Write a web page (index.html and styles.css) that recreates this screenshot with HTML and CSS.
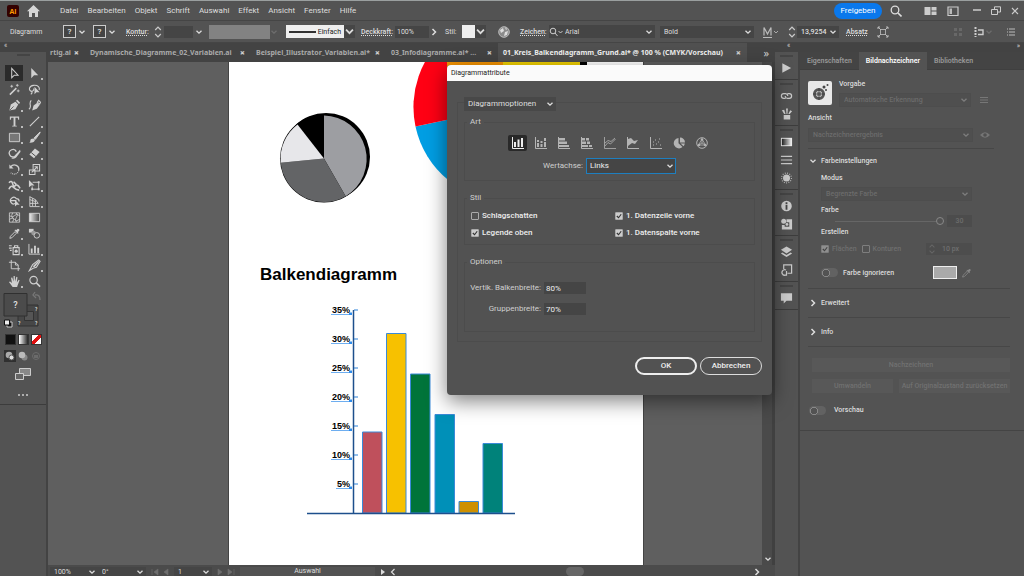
FILE: index.html
```
<!DOCTYPE html>
<html lang="de">
<head>
<meta charset="utf-8">
<title>Diagrammattribute</title>
<link rel="stylesheet" href="styles.css">
</head>
<body>
<svg class="defs" aria-hidden="true">
  <symbol id="chev" viewBox="0 0 8 8"><path d="M1.5 2.7 4 5.2 6.5 2.7" fill="none" stroke="currentColor" stroke-width="1.3"/></symbol>
  <symbol id="step" viewBox="0 0 8 14"><path d="M1.2 5 4 2.2 6.8 5M1.2 9 4 11.8 6.8 9" fill="none" stroke="currentColor" stroke-width="1.2"/></symbol>
  <symbol id="right" viewBox="0 0 8 8"><path d="M2.5 1 5.5 4 2.5 7" fill="none" stroke="currentColor" stroke-width="1.5"/></symbol>
  <symbol id="left" viewBox="0 0 8 8"><path d="M5.5 1 2.5 4 5.5 7" fill="none" stroke="currentColor" stroke-width="1.2"/></symbol>
  <symbol id="pipette" viewBox="0 0 14 14"><path d="M2 12.2 2.6 10 7.6 5 9.2 6.6 4.2 11.6Z" fill="none" stroke="currentColor"/><path d="M7 3.6 10.6 7.2 11.4 6.4 10.6 5.6 12.4 3.6Q12.4 1.8 10.6 1.8L8.6 3.6 7.8 2.8Z" fill="currentColor"/></symbol>
</svg>
<div class="app">
  <header class="menubar">
    <svg class="logo" viewBox="0 0 12 12"><rect width="12" height="12" rx="2" fill="#330000"/><text x="6" y="8.6" text-anchor="middle">Ai</text></svg>
    <svg class="home" viewBox="0 0 13 12"><path d="M6.5 0 0 6.2H2V12H5V8H8V12H11V6.2H13Z" fill="#d6d6d6"/></svg>
    <nav class="menu">
      <button>Datei</button><button>Bearbeiten</button><button>Objekt</button><button>Schrift</button><button>Auswahl</button><button>Effekt</button><button>Ansicht</button><button>Fenster</button><button>Hilfe</button>
    </nav>
    <div class="winbar">
      <button class="share">Freigeben</button>
      <svg class="i12" viewBox="0 0 12 12"><circle cx="5" cy="5" r="3.8" fill="none" stroke="#ddd" stroke-width="1.3"/><path d="M8 8 11.5 11.5" stroke="#ddd" stroke-width="1.6"/></svg>
      <svg class="arrange" viewBox="0 0 12 12"><path d="M0 2H6V10H0ZM7 2H12V5.5H7ZM7 6.5H12V10H7Z" fill="#ccc"/></svg>
      <svg class="i12" viewBox="0 0 12 12"><path d="M1 2H11V10.5H1Z" fill="none" stroke="#ccc" stroke-width="1.2"/><path d="M2.5 3.5H5V9H2.5Z" fill="#bbb"/></svg>
      <svg class="min" viewBox="0 0 8 8"><path d="M0 3H8" stroke="#ccc" stroke-width="1.5"/></svg>
      <svg class="restore" viewBox="0 0 10 10"><path d="M.5 3.5H6.5V8.5H.5ZM3.5 3V.8H9.5V6H7" fill="none" stroke="#ccc"/></svg>
      <svg class="close" viewBox="0 0 8 8"><path d="M1 1 7 7M7 1 1 7" stroke="#ccc" stroke-width="1.1"/></svg>
    </div>
  </header>

  <div class="options">
    <span class="w-name">Diagramm</span>
    <button class="q">?</button><svg class="chev"><use href="#chev"/></svg>
    <button class="q q2">?</button><svg class="chev"><use href="#chev"/></svg>
    <label class="link kontur" for="stroke">Kontur:</label>
    <svg class="step"><use href="#step"/></svg>
    <input id="stroke" class="field f-stroke"><svg class="chev"><use href="#chev"/></svg>
    <span class="profile"></span><svg class="chev off"><use href="#chev"/></svg>
    <button class="brush"><svg viewBox="0 0 28 6"><path d="M0 3H27" stroke="#000" stroke-width="1.6"/></svg>Einfach</button><svg class="chev boxed"><use href="#chev"/></svg>
    <label class="link deck" for="opac">Deckkraft:</label>
    <input id="opac" class="field f-opac" value="100%"><svg class="chev more"><use href="#right"/></svg>
    <span class="stil">Stil:</span><span class="swatch"></span><svg class="chev boxed"><use href="#chev"/></svg>
    <svg class="globe" viewBox="0 0 12 12"><circle cx="6" cy="6" r="5.3" fill="#8b8b8b" stroke="#bbb"/><path d="M2 4 5 2 6 5 3 7ZM7 6 10 5 9 9 6 10ZM7 1 9 3 8 4Z" fill="#ddd"/></svg>
    <label class="link zeichen" for="font">Zeichen:</label>
    <span class="fontbox"><svg viewBox="0 0 14 10"><circle cx="4" cy="4" r="2.8" fill="none" stroke="#ccc"/><path d="M6 6 8.5 9M9.5 4 11.5 6 13.5 4" fill="none" stroke="#ccc"/></svg><select id="font" class="sel"><option>Arial</option></select></span>
    <select class="sel weight" aria-label="Schriftschnitt"><option>Bold</option></select>
    <svg class="bigm" viewBox="0 0 16 12"><path d="M1 9.500V1.500L4.500 8 8 1.500V9.500M0 11.500H9" fill="none" stroke="#bbb" stroke-width="1.200"/><path d="M11 5 13 7 15 5" fill="none" stroke="#aaa"/></svg>
    <svg class="step"><use href="#step"/></svg>
    <select class="sel size" aria-label="Schriftgrad"><option>13,9254</option></select>
    <button class="link absatz">Absatz</button>
    <svg class="i12" viewBox="0 0 12 12"><path d="M3.500 3.500H8.500V8.500H3.500Z" fill="none" stroke="#aaa"/><path d="M1 1 4 4M11 1 8 4M1 11 4 8M11 11 8 8M1 3V1H3M9 1H11V3M1 9V11H3M9 11H11V9" stroke="#bbb" fill="none"/></svg>
    <div class="optend">
      <svg class="i10" viewBox="0 0 10 10"><path d="M1 1H4V4H1ZM6 1H9V4H6ZM1 6H4V9H1ZM6 6H9V9H6Z" fill="#686868"/></svg>
      <svg class="i12" viewBox="0 0 12 12"><path d="M2.500 1V11" stroke="#ccc" stroke-width="2" stroke-dasharray="2 1"/><path d="M5 4H10V8.500H5" stroke="#ccc" stroke-width="1.400" fill="none"/></svg>
      <svg class="chev off"><use href="#chev"/></svg>
      <svg class="i10 last" viewBox="0 0 10 10"><path d="M1 2H2M3 2H9M1 5H2M3 5H9M1 8H2M3 8H9" stroke="#bbb" stroke-width="1.200"/></svg>
    </div>
  </div>

  <div class="work">
    <aside class="tools">
      <div class="dockhead">«</div>
      <div class="grip"></div>
      <div class="toolgrid">
        <button class="on"><svg viewBox="0 0 14 14"><path d="M4 1.500V11.500L6.800 8.800H10.800Z" fill="none" stroke="currentColor" stroke-width="1.100"/></svg></button>
        <button class="sub"><svg viewBox="0 0 14 14"><path d="M3.500 1V12L6.500 9H11Z" fill="currentColor"/></svg></button>
        <button><svg viewBox="0 0 14 14"><path d="M2 12.500 9 5.500" stroke="currentColor" stroke-width="1.600"/><path d="M10 1V4M8.500 2.500H11.500M4 2V5M2.500 3.500H5.500M11 7V10M9.500 8.500H12.500" stroke="currentColor" stroke-width=".9"/></svg></button>
        <button><svg viewBox="0 0 14 14"><path d="M4 9C0 8 1 3 6 2.500S13 5 12 7.500M4 9Q5 11 3 12M4 9Q7 8 6 6" fill="none" stroke="currentColor" stroke-width="1.200"/><path d="M7 4V12L9 10H12.500Z" fill="currentColor"/></svg></button>
        <button class="sub"><svg viewBox="0 0 14 14"><path d="M1.500 12.500 3 6 8 3 11 6 8 11Z" fill="currentColor"/><path d="M8.500 2 10 .8 13 4 11.800 5.500Z" fill="currentColor"/><path d="M2 12 6 8" stroke="#444" stroke-width=".8"/></svg></button>
        <button><svg viewBox="0 0 14 14"><path d="M4.500 12.500 6 7 10 4 12.500 6.500 9.500 10.500Z" fill="currentColor"/><path d="M10 3.500 11.500 1.500 13.500 3.500 12.500 5.500ZM1 11C5 8 0 5 3.500 1.500" fill="none" stroke="currentColor" stroke-width="1.200"/></svg></button>
        <button class="sub"><svg viewBox="0 0 14 14"><path d="M2 1.500H12V5H11L10.500 3H8V11.500H9.500V12.500H4.500V11.500H6V3H3.500L3 5H2Z" fill="currentColor"/></svg></button>
        <button class="sub"><svg viewBox="0 0 14 14"><path d="M2 12 12 2" stroke="currentColor" stroke-width="1.200"/></svg></button>
        <button class="sub"><svg viewBox="0 0 14 14"><path d="M1.500 2.500H12.500V11.500H1.500Z" fill="#777" stroke="currentColor"/></svg></button>
        <button class="sub"><svg viewBox="0 0 14 14"><path d="M13 1 6.500 7.500 8 9 13 2Z" fill="currentColor" stroke="currentColor"/><path d="M6 8Q2.500 8 2.500 10.500T1 12.500Q7 13 7.500 9.500Z" fill="currentColor"/></svg></button>
        <button class="sub"><svg viewBox="0 0 14 14"><path d="M9 5A4 4 0 1 0 6.500 10.500" fill="none" stroke="currentColor" stroke-width="1.400"/><path d="M13 3 7 9.500Q6 12 3.500 12 7 13.500 9 11L13.500 5Z" fill="currentColor"/></svg></button>
        <button class="sub"><svg viewBox="0 0 14 14"><path d="M1.500 8 7.500 1.500 12.500 5.500 6.500 12Z" fill="currentColor"/><path d="M3.500 6 8.500 10.200" stroke="#444"/></svg></button>
        <button class="sub"><svg viewBox="0 0 14 14"><path d="M3 4A4.800 4.800 0 0 1 11.500 8" fill="none" stroke="currentColor" stroke-width="1.400"/><path d="M11.500 8A5 5 0 0 1 3 10.500" fill="none" stroke="currentColor" stroke-width="1.200" stroke-dasharray="1 1"/><path d="M1.500 1.500V6H6Z" fill="currentColor"/></svg></button>
        <button class="sub"><svg viewBox="0 0 14 14"><path d="M5.500 1.500H12.500V8.500H5.500ZM1.500 7.500H7.500V12.500H1.500ZM4 10 9.500 4.500M7 4H10V7" fill="none" stroke="currentColor" stroke-width="1.100"/></svg></button>
        <button class="sub"><svg viewBox="0 0 14 14"><path d="M1 4Q4 1 5 5T8 7 13 10M1 11Q3 6 6 9T12 12M6 3 9 6" fill="none" stroke="currentColor" stroke-width="1.700"/></svg></button>
        <button class="sub"><svg viewBox="0 0 14 14"><path d="M1 1V9L3.500 7H7Z" fill="currentColor"/><path d="M5 3.500H11.500V11H4.500V8" fill="none" stroke="currentColor"/><path d="M10.500 2.500H12.500V4.500H10.500ZM10.500 10H12.500V12H10.500ZM3.500 10H5.500V12H3.500Z" fill="currentColor"/></svg></button>
        <button class="sub"><svg viewBox="0 0 14 14"><path d="M8 9A3.500 3.500 0 1 1 9 4Q12 4 12 7M2 6H9" fill="none" stroke="currentColor" stroke-width="1.300"/><path d="M7.500 5V12.500L9.500 10.500H12.500Z" fill="currentColor"/></svg></button>
        <button class="sub"><svg viewBox="0 0 14 14"><path d="M2 1.500V12.500H12.500M2 2 8 5V12M2 5 8 7M2 9H11L8 5M5 3.500V12" fill="none" stroke="currentColor"/></svg></button>
        <button><svg viewBox="0 0 14 14"><path d="M1.500 2H12.500V12H1.500ZM1.500 5Q5 8 7 5T12.500 5M1.500 9Q5 6 7 9T12.500 9M5 2Q3 5 5 7T5 12M9 2Q11 5 9 7T9 12" fill="none" stroke="currentColor" stroke-width=".9"/></svg></button>
        <button><svg viewBox="0 0 14 14"><defs><linearGradient id="g1"><stop stop-color="#eee"/><stop offset="1" stop-color="#444"/></linearGradient></defs><path d="M1.500 2.500H12.500V11.500H1.500Z" fill="url(#g1)" stroke="currentColor"/></svg></button>
        <button class="sub"><svg viewBox="0 0 14 14"><use href="#pipette"/></svg></button>
        <button><svg viewBox="0 0 14 14"><path d="M1 2H6V6H1Z" fill="currentColor"/><circle cx="6" cy="6.500" r="2.500" fill="#999"/><circle cx="9.500" cy="9" r="3" fill="#555" stroke="currentColor"/></svg></button>
        <button class="sub"><svg viewBox="0 0 14 14"><path d="M5.500 5H12V12.500H5.500ZM7 5V3H10.500V5M1 3H4M1 5.500H4M2 8H4" fill="none" stroke="currentColor" stroke-width="1.200"/><circle cx="8.800" cy="8.800" r="1.700" fill="currentColor"/></svg></button>
        <button class="sub"><svg viewBox="0 0 14 14"><path d="M1 1V12H13" fill="none" stroke="currentColor"/><path d="M3 6H5V11H3ZM6.500 3H8.500V11H6.500ZM10 5H12V11H10Z" fill="currentColor"/></svg></button>
        <button><svg viewBox="0 0 14 14"><path d="M3.500 1V10.500H13M1 3.500H8L11 6.500V13M8 3.500V6.500H11" fill="none" stroke="currentColor"/></svg></button>
        <button class="sub"><svg viewBox="0 0 14 14"><path d="M1.500 12.500 5 6 11.500 1 13 2.500 9 9 5.500 10Z" fill="none" stroke="currentColor" stroke-width="1.200"/><path d="M5 8 11 2 12 3 7 9Z" fill="currentColor"/></svg></button>
        <button class="sub"><svg viewBox="0 0 14 14"><path d="M5 13 1 7.500 2.300 7 4.200 8.500 3.300 3 4.600 2.700 6 7V1.200H7.300L7.600 7 9 2 10.200 2.300 9.500 8 11.500 5 12.500 5.600 10 12V13Z" fill="currentColor"/></svg></button>
        <button><svg viewBox="0 0 14 14"><circle cx="6" cy="5.500" r="4" fill="none" stroke="currentColor" stroke-width="1.200"/><path d="M9 8.500 13 12.500" stroke="currentColor" stroke-width="1.600"/></svg></button>
      </div>
      <svg class="fills" viewBox="0 0 44 44"><path d="M17 16H37V37H17Z" fill="#474747" stroke="#333"/><path d="M23.500 22.500H32.500V31.500H23.500Z" fill="#555" stroke="#333"/><path d="M3 4.500H26V27H3Z" fill="#4b4b4b" stroke="#303030"/><path d="M34 6Q39 5 39 11M34 3 32 6 35 9" fill="none" stroke="#777" stroke-width="1.300"/><g class="qm"><text x="14.500" y="19" font-size="9" text-anchor="middle">?</text><text x="34" y="22" font-size="5">?</text><text x="17" y="36" font-size="5">?</text><text x="34" y="36" font-size="5">?</text></g><path d="M6 33H11V38H6Z" fill="#111" stroke="#ccc"/><path d="M3.500 31H8.500V36H3.500Z" fill="#eee" stroke="#111"/></svg>
      <div class="trio swatches"><i class="sw-black"></i><i class="sw-grad"></i><i class="sw-none"></i></div>
      <div class="trio modes">
        <svg class="on" viewBox="0 0 12 12"><circle cx="5" cy="5" r="3.300" fill="#aaa"/><circle cx="7.500" cy="7.500" r="2.500" fill="#ddd" stroke="#555"/></svg>
        <svg viewBox="0 0 12 12"><circle cx="7.500" cy="7.500" r="3" fill="#888"/><circle cx="5" cy="5" r="3.300" fill="#bbb"/></svg>
        <svg viewBox="0 0 12 12"><circle cx="6" cy="6" r="3.500" fill="none" stroke="#6b6b6b"/><path d="M4 5H8V8H4Z" fill="#6b6b6b"/></svg>
      </div>
      <svg class="screens" viewBox="0 0 16 12"><path d="M4.500 .500H15.500V7.500H4.500Z" fill="#888" stroke="#ccc"/><path d="M.500 5.500H8.500V11.500H.500Z" fill="#666" stroke="#ccc"/></svg>
      <div class="dots"><i></i><i></i><i></i></div>
    </aside>

    <main class="doc">
      <div class="tabs">
        <span class="tab t1">rtig.ai <b>×</b></span>
        <span class="tab t2">Dynamische_Diagramme_02_Variablen.ai <b>×</b></span>
        <span class="tab t3">Beispiel_Illustrator_Variablen.ai* <b>×</b></span>
        <span class="tab t4">03_Infodiagramme.ai* ... <b>×</b></span>
        <span class="tab active">01_Kreis_Balkendiagramm_Grund.ai* @ 100 % (CMYK/Vorschau) <b>×</b></span>
        <span class="over">»</span>
      </div>
      <div class="stage">
        <div class="canvas">
          <div class="artboard">
            <svg viewBox="229 62 414 503" width="414" height="503">
              <path d="M508 107 415.500 126.500A94 94 0 0 0 508 201Z" fill="#009ee3"/>
              <path d="M508 107 415.500 126.500A94 94 0 0 1 447 35Z" fill="#ff0014"/>
              <path d="M447 62H503V80H447Z" fill="#f39200"/><path d="M503 62H580V80H503Z" fill="#f0d000"/><path d="M580 62H587V80H580Z"/>
              <circle cx="326" cy="157" r="44"/>
              <circle cx="324" cy="158.500" r="44" fill="#000"/>
              <path d="M324 158.500V115.500A43.500 43.500 0 0 1 345.700 196.200Z" fill="#9d9ea2"/>
              <path d="M324 158.500 345.700 196.200A43.500 43.500 0 0 1 280.700 162.800Z" fill="#636466"/>
              <path d="M324 158.500 280.700 162.800A43.500 43.500 0 0 1 297.500 124.500Z" fill="#e7e7ea"/>
              <text class="charttitle" x="260" y="280">Balkendiagramm</text>
              <g stroke="#3a8ad8" stroke-width="1">
                <path d="M362.500 432H382V513H362.500Z" fill="#bf505c"/><path d="M386.500 333.500H406V513H386.500Z" fill="#f7c100"/><path d="M410.500 374H430V513H410.500Z" fill="#00743a"/><path d="M435 414.500H454.500V513H435Z" fill="#0090b8"/><path d="M459 501.500H478.500V513H459Z" fill="#ce9000"/><path d="M483 443.500H502.500V513H483Z" fill="#00827a"/>
              </g>
              <path d="M353.500 310V513M307 513.500H515" stroke="#1d4f8c" stroke-width="1.500"/>
              <path d="M354 310H358M354 339H358M354 368H358M354 397H358M354 426H358M354 455H358M354 484H358" stroke="#2a80d8"/>
              <path d="M331 314.500H350M331 343.500H350M331 372.500H350M331 401.500H350M331 430.500H350M331 459.500H350M336 488.500H350" stroke="#2f8bea" stroke-width=".7"/>
              <g class="axis"><text x="350" y="313">35%</text><text x="350" y="342">30%</text><text x="350" y="371">25%</text><text x="350" y="400">20%</text><text x="350" y="429">15%</text><text x="350" y="458">10%</text><text x="350" y="487">5%</text></g>
              <path d="M349 312.500H352V315H349ZM349 341.500H352V344H349ZM349 370.500H352V373H349ZM349 399.500H352V402H349ZM349 428.500H352V431H349ZM349 457.500H352V460H349ZM349 486.500H352V489H349Z" fill="#2f8bea"/>
            </svg>
          </div>
        </div>
        <div class="vscroll"><svg class="chev"><use href="#chev"/></svg></div>
      </div>
      <footer class="status">
        <select class="sel s-zoom" aria-label="Zoom"><option>100%</option></select>
        <select class="sel s-rot" aria-label="Drehung"><option>0°</option></select>
        <svg class="navs" viewBox="0 0 20 8"><path d="M2 1V7M8 1 4 4 8 7ZM18 1 14 4 18 7Z" fill="#6e6e6e" stroke="#6e6e6e" stroke-width=".6"/></svg>
        <select class="sel s-page" aria-label="Zeichenfläche"><option>1</option></select>
        <svg class="navs" viewBox="0 0 20 8"><path d="M18 1V7M12 1 16 4 12 7ZM2 1 6 4 2 7Z" fill="#6e6e6e" stroke="#6e6e6e" stroke-width=".6"/></svg>
        <span class="mode">Auswahl</span>
        <svg class="arrow" viewBox="0 0 8 8"><path d="M2 1V7L6 4Z" fill="#ddd"/></svg>
        <div class="hscroll"><svg class="chev"><use href="#left"/></svg><i></i><svg class="chev"><use href="#right"/></svg></div>
      </footer>
      <section class="dialog" role="dialog" aria-label="Diagrammattribute">
        <h1>Diagrammattribute</h1>
        <form class="dlgbody">
          <div class="outer">
            <select class="sel pick" aria-label="Bereich"><option>Diagrammoptionen</option></select>
            <fieldset class="art"><legend>Art</legend>
              <div class="types">
                <button type="button" class="on"><svg viewBox="0 0 14 14"><path d="M1.500 1V12.500H13" fill="none" stroke="currentColor"/><path d="M3 6H5V11H3ZM6.500 3.500H8.500V11H6.500ZM10 2H12V11H10Z" fill="currentColor"/></svg></button>
                <button type="button"><svg viewBox="0 0 14 14"><path d="M1.500 1V12.500H13" fill="none" stroke="currentColor"/><path d="M3 4H5V6H3ZM3 7H5V11H3ZM6.500 5H8.500V7H6.500ZM6.500 8H8.500V11H6.500ZM10 2H12V5H10ZM10 6H12V11H10Z" fill="currentColor"/></svg></button>
                <button type="button"><svg viewBox="0 0 14 14"><path d="M1.500 1V12.500H13" fill="none" stroke="currentColor"/><path d="M2 2H8V4.500H2ZM2 5.500H10V8H2ZM2 9H12V11H2Z" fill="currentColor"/></svg></button>
                <button type="button"><svg viewBox="0 0 14 14"><path d="M1.500 1V12.500H13" fill="none" stroke="currentColor"/><path d="M2 2H5V4.500H2ZM6 2H9V4.500H6ZM2 5.500H6V8H2ZM7 5.500H10V8H7ZM2 9H8V11H2ZM9 9H12V11H9Z" fill="currentColor"/></svg></button>
                <button type="button"><svg viewBox="0 0 14 14"><path d="M1.500 1V12.500H13M2 10 5 6.500 7.500 8 12.500 3M2 7 5 4.500 8 5.500 12 2" fill="none" stroke="currentColor" stroke-width=".8"/></svg></button>
                <button type="button"><svg viewBox="0 0 14 14"><path d="M1.500 1V12.500H13" fill="none" stroke="currentColor"/><path d="M2 3 5 2 8 5 12 4 9 8 6 7 2 10Z" fill="currentColor"/></svg></button>
                <button type="button"><svg viewBox="0 0 14 14"><path d="M1.500 1V12.500H13" fill="none" stroke="currentColor"/><path d="M4 9H5M6 4H7M7 8H8M9 6H10M11 9H12M10 3H11M4 6H5" stroke="currentColor" stroke-width="1.200"/></svg></button>
                <button type="button"><svg viewBox="0 0 14 14"><path d="M6.500 2A5.200 5.200 0 1 0 10.500 11L6.500 7.200Z" fill="currentColor"/><path d="M8 1.500V6.500H13A5 5 0 0 0 8 1.500ZM8.500 7.500 11.500 10.300A5 5 0 0 0 12.800 7.500Z" fill="currentColor"/></svg></button>
                <button type="button"><svg viewBox="0 0 14 14"><circle cx="7" cy="7" r="5.300" fill="none" stroke="currentColor"/><path d="M7 3 10.500 9H3.500ZM7 7V3M7 7 3.500 9M7 7 10.500 9" fill="none" stroke="currentColor" stroke-width=".8"/><circle cx="7" cy="3.500" r="1.200" fill="currentColor"/><circle cx="4" cy="9" r="1.200" fill="currentColor"/><circle cx="10" cy="9" r="1.200" fill="currentColor"/></svg></button>
              </div>
              <div class="axisrow"><label for="wert">Wertachse:</label><select id="wert" class="sel focus"><option>Links</option></select></div>
            </fieldset>
            <fieldset class="style"><legend>Stil</legend>
              <div class="checks">
                <label><input type="checkbox">Schlagschatten</label>
                <label><input type="checkbox" checked>1. Datenzeile vorne</label>
                <label><input type="checkbox" checked>Legende oben</label>
                <label><input type="checkbox" checked>1. Datenspalte vorne</label>
              </div>
            </fieldset>
            <fieldset class="opts"><legend>Optionen</legend>
              <div class="nums">
                <label for="bb">Vertik. Balkenbreite:</label><input id="bb" class="field" value="80%">
                <label for="gb">Gruppenbreite:</label><input id="gb" class="field" value="70%">
              </div>
            </fieldset>
          </div>
          <div class="buttons"><button type="button" class="ok">OK</button><button type="button">Abbrechen</button></div>
        </form>
      </section>
    </main>

    <aside class="rail">
      <div class="dockhead">«</div>
      <div class="rg"><svg viewBox="0 0 14 14"><path d="M2.500 2V12L12 7Z"/></svg></div>
      <div class="rg">
        <svg viewBox="0 0 14 14"><path d="M6 9.500H4A2.500 2.500 0 0 1 4 4.500H6Q8 4.500 8.500 7M8 4.500H10A2.500 2.500 0 0 1 10 9.500H8Q6 9.500 5.500 7" class="ln"/></svg>
        <svg viewBox="0 0 14 14"><path d="M4 8H11V13H4ZM4.500 7 2 3 4.500 2.500 6 7ZM7 7 6.500 1 8.500 1 8 7ZM9 7 11 3 13 4 10.500 7Z"/></svg></div>
      <div class="rg">
        <svg viewBox="0 0 14 14"><path d="M1 2.500H13V11.500H1Z" fill="#eee"/><path d="M2 3.500H12V10.500H2Z" fill="url(#g2)"/><defs><linearGradient id="g2"><stop stop-color="#222"/><stop offset="1" stop-color="#eee"/></linearGradient></defs></svg>
        <svg viewBox="0 0 14 14"><path d="M1 3H13M1 7H13M1 11H13" class="ln"/></svg>
        <svg viewBox="0 0 14 14"><circle cx="7" cy="7" r="3.800"/><circle cx="7" cy="7" r="5.300" fill="none" stroke="#bbb" stroke-width="1.300" stroke-dasharray="1 1.500"/></svg></div>
      <div class="rg">
        <svg viewBox="0 0 14 14"><circle cx="7" cy="7" r="5.700"/><path d="M7 3V5M7 6V11" stroke="#444" stroke-width="2"/></svg>
        <svg viewBox="0 0 14 14"><path d="M7 2H13V13H2V8H5V10H10V5H7Z"/><circle cx="4" cy="4" r="2.700"/><circle cx="7.500" cy="7.500" r="1.500"/></svg></div>
      <div class="rg">
        <svg viewBox="0 0 14 14"><path d="M7 1 13 4.700 7 8.500 1 4.700Z"/><path d="M2.500 7.500 1 8.700 7 12.500 13 8.700 11.500 7.500 7 10.300Z"/></svg>
        <svg viewBox="0 0 14 14"><path d="M4 6V1.500H12.500V10.500H8" class="ln"/><path d="M6.500 7A3 3 0 1 0 7 12M7 8V12.500H3" class="ln"/></svg></div>
      <div class="rg"><svg viewBox="0 0 14 14"><path d="M1 2H13V10H7L4 13V10H1Z"/></svg></div>
    </aside>

    <aside class="panel">
      <div class="dockhead right">»</div>
      <div class="ptabs"><button>Eigenschaften</button><button class="on">Bildnachzeichner</button><button>Bibliotheken</button></div>
      <div class="pbody">
        <div class="preset">
          <svg class="thumb" viewBox="0 0 24 24"><rect width="24" height="24" rx="2" fill="#e8e8e8"/><circle cx="11" cy="13" r="4.500" fill="none" stroke="#555" stroke-width="3"/><path d="M9 11H13V15H9Z" fill="#888"/><path d="M5 13H17M11 7V19" stroke="#444"/><circle cx="16" cy="6" r="1.500" fill="#444"/><circle cx="19.500" cy="4" r="1" fill="#444"/><circle cx="18" cy="9" r="1" fill="#444"/></svg>
          <div class="grow"><label for="vg">Vorgabe</label>
            <div class="line"><select id="vg" class="sel dis" disabled><option>Automatische Erkennung</option></select><svg class="i10" viewBox="0 0 10 10"><path d="M1 2.500H9M1 5H9M1 7.500H9" stroke="#777"/></svg></div></div>
        </div>
        <label class="blk" for="an">Ansicht</label>
        <div class="line ansicht"><select id="an" class="sel dis" disabled><option>Nachzeichnerergebnis</option></select><svg class="i10" viewBox="0 0 10 10"><path d="M0 5Q5 -.500 10 5 5 10.500 0 5Z" fill="#757575"/><circle cx="5" cy="5" r="1.800" fill="#505050"/></svg></div>
        <hr class="short">
        <button class="acc open"><svg class="chev"><use href="#chev"/></svg>Farbeinstellungen</button>
        <div class="indent">
          <label class="blk" for="mo">Modus</label>
          <select id="mo" class="sel dis" disabled><option>Begrenzte Farbe</option></select>
          <label class="blk" for="fa">Farbe</label>
          <div class="line slide"><input id="fa" type="range" min="0" max="30" value="30" disabled><input class="field dis n30" value="30" disabled aria-label="Farbanzahl"></div>
          <div class="blk">Erstellen</div>
          <div class="line create"><label><input type="checkbox" checked disabled>Flächen</label><label><input type="checkbox" disabled>Konturen</label><span class="px"><svg class="step"><use href="#step"/></svg><input class="field" value="10 px" disabled aria-label="Konturstärke"></span></div>
          <div class="line ignore"><label class="tg"><input type="checkbox" class="toggle">Farbe ignorieren</label><span class="grey"></span><svg class="pip"><use href="#pipette"/></svg></div>
        </div>
        <hr>
        <button class="acc"><svg class="chev"><use href="#right"/></svg>Erweitert</button>
        <hr>
        <button class="acc"><svg class="chev"><use href="#right"/></svg>Info</button>
        <hr>
        <div class="acts"><button disabled class="full">Nachzeichnen</button><button disabled>Umwandeln</button><button disabled>Auf Originalzustand zurücksetzen</button></div>
        <label class="tg vorschau"><input type="checkbox" class="toggle">Vorschau</label>
      </div>
    </aside>
  </div>
</div>
</body>
</html>
```
FILE: styles.css
```
* { box-sizing: border-box; }
html, body { margin: 0; height: 100%; overflow: hidden; }
body { background: #535353; color: #dedede; font: 7px/10px Roboto, "Open Sans", sans-serif; white-space: nowrap; }
button, input, select { font: inherit; color: inherit; border: 0; margin: 0; padding: 0; background: none; border-radius: 0; }
svg { display: block; flex: none; }
.defs { position: absolute; width: 0; height: 0; }
.app { display: flex; flex-direction: column; height: 100vh; }
.chev { width: 8px; height: 8px; color: #ddd; }
.off { color: #6e6e6e; }
.step { width: 8px; height: 14px; color: #ccc; }
.i12 { width: 12px; height: 12px; }
.i10 { width: 10px; height: 10px; }
.sel { appearance: none; height: 12px; padding: 0 12px 0 4px; background: #454545 url("data:image/svg+xml,%3Csvg xmlns='http://www.w3.org/2000/svg' width='8' height='8'%3E%3Cpath d='M1.500 2.700 4 5.200 6.500 2.700' fill='none' stroke='%23ddd' stroke-width='1.300'/%3E%3C/svg%3E") no-repeat right 2px center; }
.field { background: #454545; height: 12px; padding: 0 2px; }

.menubar { display: flex; align-items: center; height: 21px; flex: none; padding: 0 5px 0 7px; border-top: 1px solid #9a9f9f; border-bottom: 1px solid #454545; }
.logo { width: 12px; height: 12px; }
.logo text { font: bold 7px "Open Sans", sans-serif; fill: #ff9a00; }
.home { width: 13px; height: 12px; margin-left: 8px; }
.menu { display: flex; gap: 9px; margin-left: 20px; font-size: 8px; }
.winbar { display: flex; align-items: center; margin-left: auto; gap: 14px; }
.share { height: 16px; width: 48px; border-radius: 8px; background: #0a78ec; color: #fff; font-size: 8px; margin-right: -6px; }
.winbar .i12 + .arrange { margin-left: 8px; }
.arrange { width: 13px; height: 12px; margin-right: -4px; }
.min { width: 8px; height: 8px; }
.restore { width: 10px; height: 10px; margin: 0 2px 0 -4px; }
.close { width: 8px; height: 8px; margin-left: -6px; }

.options { display: flex; align-items: center; height: 22px; flex: none; padding: 0 8px 0 10px; border-bottom: 1px solid #454545; }
.w-name { width: 53px; }
.q { width: 13px; height: 13px; border: 1px solid #ccc; background: #444; font-size: 8px; font-weight: 600; line-height: 11px; margin-right: 2px; }
.q2 { margin-left: 7px; }
.link { font-weight: 500; text-decoration: underline dotted; }
.kontur { margin-left: 10px; width: 28px; }
.f-stroke { width: 29px; margin: 0 2px; }
.profile { width: 61px; height: 14px; background: #828282; margin-left: 6px; }
.brush { display: flex; align-items: center; justify-content: space-between; width: 58px; height: 13px; margin-left: 8px; padding: 0 3px; background: #eee; color: #222; }
.brush svg { width: 28px; height: 6px; }
.boxed { background: #464646; width: 11px; height: 13px; }
.deck { margin-left: 6px; width: 34px; }
.f-opac { width: 34px; }
.more { margin-left: 1px; }
.stil { margin-left: 7px; width: 17px; }
.swatch { width: 13px; height: 13px; background: #eee; }
.globe { width: 12px; height: 12px; margin-left: 12px; }
.zeichen { margin-left: 10px; width: 29px; }
.fontbox { display: flex; align-items: center; background: #454545; width: 106px; height: 13px; }
.fontbox svg { width: 14px; height: 10px; }
.fontbox .sel { flex: 1; padding-left: 2px; }
.weight { width: 94px; margin-left: 5px; }
.bigm { width: 16px; height: 12px; margin: 0 9px; }
.size { width: 42px; margin-left: 1px; font-weight: 500; }
.absatz { margin: 0 9px 0 7px; }
.optend { display: flex; align-items: center; gap: 6px; margin-left: auto; }
.optend .i12 { margin-left: 4px; }
.optend .chev { margin-left: -6px; }
.last { margin-left: 7px; }

.work { display: flex; flex: 1; min-height: 0; }
.dockhead { height: 9px; flex: none; background: #434343; color: #ccc; font-size: 7px; line-height: 7px; padding: 0 4px; }
.rail .dockhead { padding: 0 12px; }
.dockhead.right { text-align: right; }
.tools { width: 48px; flex: none; border-right: 2px solid #434343; display: flex; flex-direction: column; align-items: center; }
.tools .dockhead { align-self: stretch; }
.grip { width: 13px; height: 2px; margin: 2px 0 9px; background: #444; }
.toolgrid { display: grid; grid-template-columns: 20px 20px; grid-auto-rows: 16px; justify-items: center; margin-left: 2px; color: #d0d0d0; }
.toolgrid button { position: relative; display: grid; place-items: center; width: 18px; height: 16px; }
.toolgrid svg { width: 13px; height: 13px; }
.toolgrid .on { background: #2b2b2b; }
.toolgrid .sub::after { content: ""; position: absolute; right: 0; bottom: 1px; border: 1px solid #bbb; }
.fills { width: 44px; height: 44px; }
.qm { fill: #ddd; font-weight: 600; }
.trio { display: flex; gap: 2px; }
.swatches i { width: 11px; height: 11px; border: 1px solid #333; }
.swatches { margin-top: 1px; }
.sw-black { background: #111; }
.sw-grad { background: linear-gradient(90deg, #fff, #222); }
.sw-none { background: linear-gradient(135deg, #fff 38%, #e01010 38% 62%, #fff 62%); }
.modes { margin-top: 5px; gap: 1px; }
.modes svg { width: 12px; height: 12px; }
.modes .on { background: #303030; }
.screens { width: 16px; height: 12px; margin-top: 6px; }
.dots { display: flex; justify-content: center; gap: 2px; padding: 14px 0 8px; align-self: stretch; border-bottom: 1px solid #3c3c3c; }
.dots i { width: 2px; height: 2px; border-radius: 1px; background: #ccc; }

.doc { position: relative; flex: 1; min-width: 0; display: flex; flex-direction: column; }
.tabs { display: flex; align-items: center; height: 19px; flex: none; background: #434343; color: #aaa; font: bold 7px/20px "Noto Sans", sans-serif; }
.tab { display: flex; justify-content: space-between; gap: 2px; padding: 0 6px 0 5px; height: 19px; }
.tab b { font-size: 9px; color: #ccc; }
.t1 { width: 37px; padding-left: 2px; }
.t2 { width: 166px; }
.t3 { width: 135px; }
.t4 { width: 112px; }
.active { width: 249px; background: #505050; color: #eee; }
.over { margin-left: auto; padding-right: 6px; color: #ccc; font-size: 11px; font-weight: 400; line-height: 16px; }
.stage { display: flex; flex: 1; min-height: 0; }
.canvas { flex: 1; background: #5f5f5f; overflow: hidden; padding: 0 119px 0 181px; }
.artboard { height: 100%; background: #fff; overflow: hidden; box-shadow: 0 0 0 1px #444; }
.charttitle { font: bold 17px "Liberation Sans", sans-serif; }
.axis text { font: bold 9px "Liberation Sans", sans-serif; text-anchor: end; }
.vscroll { width: 13px; background: #4a4a4a; display: flex; align-items: flex-end; padding: 2px; border-right: 3px solid #404040; }
.status { display: flex; align-items: center; height: 11px; flex: none; overflow: hidden; padding: 2px 14px 0 2px; background: #4b4b4b; }
.status .sel { padding-left: 4px; height: 9px; }
.s-zoom { width: 48px; }
.s-rot { width: 48px; }
.s-page { width: 38px; }
.navs { width: 20px; height: 8px; margin: 0 4px; }
.mode { width: 135px; text-align: center; background: #535353; line-height: 9px; }
.arrow { width: 8px; height: 8px; margin: 0 2px 0 4px; }
.hscroll { flex: 1; display: flex; align-items: center; justify-content: space-between; }
.hscroll i { width: 18px; height: 9px; border-radius: 5px; background: #666; }

.dialog { position: absolute; right: 3px; top: 22px; width: 325px; background: #525252; border-radius: 4px; overflow: hidden; box-shadow: 0 6px 20px rgba(0, 0, 0, .5); }
.dialog h1 { margin: 0; height: 16px; background: #fafafa; color: #222; font: 7px/16px Roboto, sans-serif; padding-left: 4px; }
.dlgbody { padding: 21px 10px 20px; font-size: 8px; }
.outer { position: relative; border: 1px solid #4c4c4c; padding: 13px 6px 9px; }
.pick { position: absolute; left: 6px; top: -6px; width: 92px; height: 14px; background-color: #484848; }
fieldset { margin: 0; padding: 0; min-width: 0; border: 1px solid #4c4c4c; }
legend { margin-left: 2px; padding: 0 3px; line-height: 12px; color: #cfcfcf; }
.art, .style { margin-bottom: 11px; }
.types { display: flex; justify-content: center; gap: 4px; padding: 7px 0 6px; color: #b4b4b4; }
.types button { width: 19px; height: 16px; display: grid; place-items: center; border-radius: 2px; }
.types svg { width: 14px; height: 14px; }
.types .on { background: #292929; color: #eee; }
.axisrow { display: flex; align-items: center; gap: 3px; padding: 1px 0 6px; color: #cfcfcf; }
.axisrow label { width: 118px; text-align: right; }
.focus { width: 90px; height: 16px; outline: 1px solid #1e7fc0; outline-offset: -1px; color: #eee; }
.checks { display: grid; grid-template-columns: 144px auto; row-gap: 7px; padding: 7px 6px 6px; color: #eee; justify-content: start; font-weight: 500; }
.checks label, .create label { display: flex; align-items: center; gap: 3px; }
input[type=checkbox] { appearance: none; width: 8px; height: 8px; border: 1px solid #aaa; border-radius: 1px; }
input[type=checkbox]:not(.toggle):checked { background: #ccc url("data:image/svg+xml,%3Csvg xmlns='http://www.w3.org/2000/svg' viewBox='0 0 8 8'%3E%3Cpath d='M1.500 4 3.500 6 6.500 2' fill='none' stroke='%23333' stroke-width='1.300'/%3E%3C/svg%3E") center / 7px; }
.nums { display: grid; grid-template-columns: 72px 42px; column-gap: 3px; row-gap: 9px; padding: 14px 0 16px 4px; align-items: center; justify-items: end; color: #cfcfcf; }
.nums .field { width: 42px; color: #eee; }
.buttons { display: flex; justify-content: flex-end; gap: 3px; padding-top: 15px; font-weight: 500; color: #eee; }
.buttons button { width: 62px; height: 18px; border: 1px solid #ddd; border-radius: 9px; }
.buttons .ok { border-width: 2px; border-color: #eee; }

.rail { width: 25px; flex: none; border-right: 2px solid #434343; }
.rg { display: flex; flex-direction: column; align-items: center; padding: 7px 0 2px; border-bottom: 1px solid #3d3d3d; background: linear-gradient(#454545, #454545) no-repeat center 3px / 13px 2px; }
.rg svg { width: 13px; height: 18px; fill: #ccc; }
.rg .ln { fill: none; stroke: #ccc; stroke-width: 1.3; }

.panel { width: 224px; flex: none; color: #dcdcdc; }
.ptabs { display: flex; height: 18px; background: #444; color: #999; border-bottom: 1px solid #3f3f3f; }
.ptabs button { padding: 0 7px; font-weight: 600; font-size: 7px; }
.ptabs .on { background: #535353; color: #fff; height: 18px; }
.pbody { padding: 9px 14px 0 8px; border-bottom: 1px solid #444; display: flex; flex-direction: column; font-weight: 500; }
.preset { display: flex; gap: 7px; padding-right: 21px; }
.thumb { width: 24px; height: 24px; margin-top: 2px; }
.grow { flex: 1; }
.line { display: flex; align-items: center; gap: 7px; }
.dis { color: #6c6c6c; background-color: #4f4f4f; opacity: 1; }
.line .dis.sel { flex: 1; }
.sel.dis { height: 14px; background-blend-mode: soft-light; border: 1px solid #4d4d4d; }
.preset label { display: block; }
.preset .line { margin-top: 4px; gap: 8px; }
.blk { display: block; height: 10px; }
.pbody > .blk { margin-top: 6px; }
.ansicht { padding-right: 20px; margin-top: 5px; }
hr { border: 0; border-top: 1px solid #474747; margin: 0; width: 100%; }
hr.short { width: 186px; margin-top: 6px; }
.acc { display: flex; align-items: center; gap: 4px; height: 28px; padding-left: 1px; font-weight: 500; }
.acc.open { height: 24px; }
.indent { padding: 0 38px 0 13px; display: flex; flex-direction: column; }
.indent > .sel { margin: 4px 0; }
.slide { padding-left: 14px; gap: 3px; }
input[type=range] { appearance: none; flex: 1; min-width: 0; height: 9px; background: linear-gradient(#666, #666) no-repeat center / 100% 1px; }
input[type=range]::-webkit-slider-thumb { appearance: none; width: 8px; height: 8px; border: 1px solid #888; border-radius: 4px; background: #535353; }
.n30 { width: 25px; text-align: center; background: #4c4c4c; }
.create { margin-top: 6px; gap: 5px; color: #6f6f6f; }
.create input[type=checkbox] { opacity: .5; }
.px { display: flex; align-items: center; gap: 4px; width: 46px; background: #4d4d4d; margin-left: auto; }
.px .step { height: 12px; color: #666; margin-left: 2px; }
.px .field { width: 32px; background: none; }
.ignore { margin-top: 11px; gap: 4px; padding-bottom: 9px; }
.tg { display: flex; align-items: center; gap: 5px; }
.toggle[type=checkbox] { width: 17px; height: 9px; border: 0; border-radius: 5px; background: radial-gradient(circle at 5px 5px, #535353 3px, #888 3px 4px, transparent 4px), #626262; }
.grey { width: 24px; height: 13px; margin-left: auto; background: #aaa; border: 1px solid #eee; }
.pip { width: 11px; height: 12px; color: #888; }
.acts { display: grid; grid-template-columns: 81px 1fr; gap: 7px 6px; padding: 11px 0 12px 4px; color: #717171; }
.acts button { height: 14px; background: #585858; }
.full { grid-column: 1 / -1; }
.vorschau { padding-bottom: 15px; margin-left: 1px; gap: 8px; }
```
